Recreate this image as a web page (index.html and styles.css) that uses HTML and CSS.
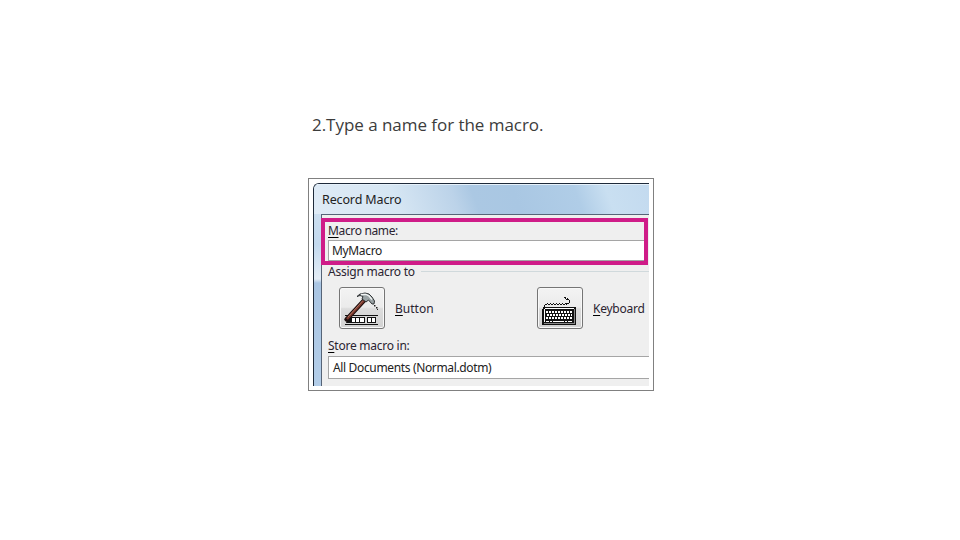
FILE: index.html
```
<!DOCTYPE html>
<html lang="en">
<head>
    <meta charset="UTF-8">
    <title>Record Macro</title>
    <link rel="stylesheet" href="styles.css">
</head>
<body>

    <div class="container">
        <h2 class="heading"><span>2.Type a name for the macro.</span></h2>

        <div class="frame">
            <div class="dialog">
                <div class="title-bar"><span>Record Macro</span></div>

                <div class="dialog-body">
                    <div class="name-section">
                        <div class="label name-label"><span><u>M</u>acro name:</span></div>
                        <div class="field name-field"><span>MyMacro</span></div>
                    </div>

                    <div class="group-title">
                        <span class="label assign-label">Assign macro to</span>
                        <span class="group-line"></span>
                    </div>

                    <div class="assign-row">
                        <div class="assign-item">
                            <button class="icon-button">
                                <!-- Hammer over a toolbar strip -->
                                <svg width="44" height="40" viewBox="0 0 44 40">
                                    <path d="M5 27.5H38M5 36.5H38" stroke="#111" fill="none"/>
                                    <path d="M8 29H25V35H6ZM27 29H36V35H27Z" fill="#111"/>
                                    <path d="M12 30h3v4h-3zM16 30h3v4h-3zM20 30h4v4h-4zM28 30h3v4h-3zM32 30h3v4h-3z" fill="#fff"/>
                                    <path d="M6.5 31.5L24 12.5" stroke="#1d0e0d" stroke-width="4.4" stroke-linecap="round"/>
                                    <path d="M7 31L24 12.5" stroke="#7e3a2e" stroke-width="2.4"/>
                                    <path d="M8 29L23 12.5" stroke="#b98070" stroke-width=".8"/>
                                    <path d="M17 8.5L20 6L25 5L29 6L32 9L34.5 13L34 16H32L28.5 12L26 14L22 11L23 8.5L20 7.5Z" fill="#9aa3a5" stroke="#202426" stroke-width=".9"/>
                                    <path d="M21 6.5L26 6.5L29 8L32 11.5" stroke="#f2f5f5" stroke-width="1.3" fill="none"/>
                                    <path d="M34 17h1.5v1.5h-1.5zM36 19h1.5v1.5h-1.5zM37 21h1v1h-1z" fill="#222"/>
                                </svg>
                            </button>
                            <span class="label button-label"><u>B</u>utton</span>
                        </div>
                        <div class="assign-item">
                            <button class="icon-button">
                                <!-- Keyboard with a curled cable -->
                                <svg width="44" height="40" viewBox="0 0 44 40" shape-rendering="crispEdges">
                                    <path d="M7 16.5H29" stroke="#111" stroke-dasharray="2 1"/>
                                    <path d="M9 15.5H29" stroke="#111" stroke-dasharray="1 2"/>
                                    <path d="M6 17h1v2h-1zM28 15h3v1h-3zM31 12h1v3h-1zM28 11h3v1h-3zM27 9h1v2h-1zM26 9h1v1h-1zM29 10h1v1h-1z" fill="#111"/>
                                    <path d="M5 19H38V37H4V21H5Z" fill="#111"/>
                                    <path d="M7 20H36V21H7ZM6 21H7V34H6Z" fill="#fff"/>
                                    <path d="M8 24H34M9 27H34M8 30H34" stroke="#fff" stroke-width="2" stroke-dasharray="2 1"/>
                                    <path d="M8 33h3v1h-3zM12 33h2v1h-2zM15 33h11v1h-11zM27 33h2v1h-2zM30 33h4v1h-4z" fill="#fff"/>
                                    <path d="M36.5 21V35.5H6" fill="none" stroke="#888"/>
                                </svg>
                            </button>
                            <span class="label keyboard-label"><u>K</u>eyboard</span>
                        </div>
                    </div>

                    <div class="label store-label"><span><u>S</u>tore macro in:</span></div>
                    <div class="field store-field"><span>All Documents (Normal.dotm)</span></div>
                </div>
            </div>
        </div>
    </div>

</body>
</html>
```
FILE: styles.css
```
* {
    margin: 0;
    padding: 0;
    box-sizing: border-box;
}

body {
    height: 540px;
    font-family: 'Noto Sans', 'Open Sans', sans-serif;
    background: #fff;
    color: #222;
    overflow: hidden;
}

.container {
    width: 346px;
    margin-left: 308px;
    padding-top: 112px;
}

.heading {
    height: 66px;
    padding-left: 4px;
    font-family: 'Open Sans', sans-serif;
    font-size: 17px;
    font-weight: 400;
    line-height: 26px;
    letter-spacing: -0.04px;
    color: #3c3c3c;
    white-space: nowrap;
}

/* Picture frame */
.frame {
    height: 213px;
    padding: 4px;
    border: 1px solid #808080;
}

/* Dialog window, cut off on the right and bottom */
.dialog {
    width: 336px;
    height: 203px;
    padding-left: 7px;
    border: solid #1e2a3a;
    border-width: 1px 0 0 1px;
    border-top-left-radius: 6px;
    background: linear-gradient(#d3e3f1, #c3d9ee 30%, #e4edf6 47%, #a9c5e3 49%, #b3cde8);
    overflow: hidden;
    font-size: 12px;
    white-space: nowrap;
}

.title-bar {
    height: 30px;
    margin-left: -7px;
    padding-left: 8px;
    font-size: 12.5px;
    line-height: 32px;
    letter-spacing: -0.13px;
    box-shadow: inset 0 1px #e6f1fa;
    background: linear-gradient(70deg, #dfebf6 0%, #d6e6f3 25%, #bcd3e9 42%, #abc8e3 48%, #a9c7e3 60%, #b0cde7 78%, #c9dff1 87%, #c3daef 100%);
}

.dialog-body {
    height: 172px;
    border: solid #566477;
    border-width: 1px 0 0 1px;
    background: #efefef;
}

/* Highlighted name field */
.name-section {
    width: 327px;
    height: 47px;
    margin: 3px 0 0 -1px;
    padding: 0 0 0 3px;
    border: 4px solid #cf1c88;
}

.label {
    color: #2b2431;
    letter-spacing: -0.25px;
}

.label u {
    text-decoration-color: #000;
    text-underline-offset: 2px;
}

.field {
    border: 1px solid #a5a5a5;
    border-right: none;
    background: #fff;
    letter-spacing: -0.35px;
}

.name-label {
    height: 18px;
    line-height: 17px;
    letter-spacing: -0.35px;
}

.name-field {
    height: 21px;
    padding-left: 3px;
    line-height: 20px;
}

.group-title {
    display: flex;
    align-items: center;
    height: 13px;
    padding-left: 6px;
    line-height: 13px;
}

.group-line {
    flex: 1;
    height: 1px;
    margin-left: 6px;
    background: #d0d9dc;
}

.assign-row {
    display: flex;
    padding: 9px 0 0 17px;
}

.assign-item {
    display: flex;
    align-items: center;
    width: 198px;
    flex-shrink: 0;
}

.icon-button {
    width: 46px;
    height: 42px;
    margin-right: 10px;
    border: 1px solid #757575;
    border-radius: 3px;
    background: linear-gradient(#f3f3f3 0%, #ebebeb 48%, #dcdcdc 52%, #d2d2d2 100%);
    box-shadow: inset 0 0 0 1px #f8f8f8;
}

.icon-button svg {
    display: block;
}

.button-label {
    letter-spacing: 0;
}

.store-label {
    height: 27px;
    padding-left: 6px;
    line-height: 34px;
}

.store-field {
    height: 23px;
    margin-left: 6px;
    padding-left: 4px;
    line-height: 22px;
}
```
